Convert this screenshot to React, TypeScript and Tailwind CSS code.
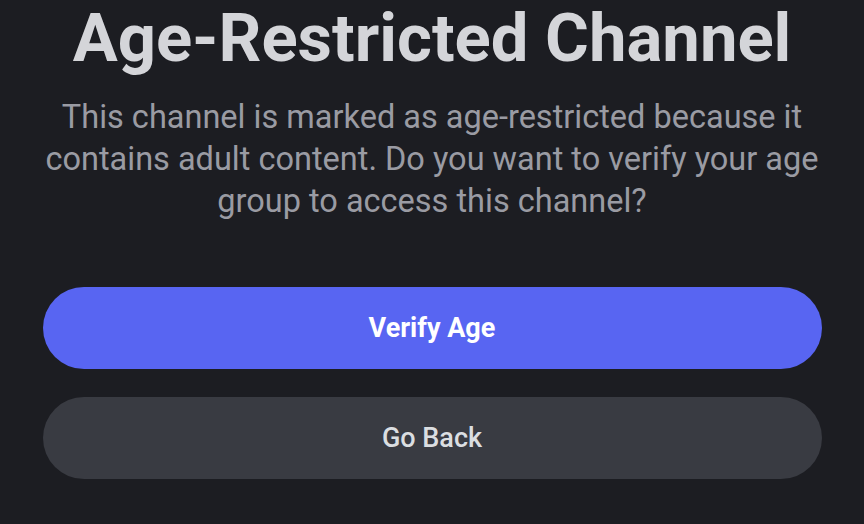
export default function App() {
  return (
    <div className="w-[864px] h-[524px] overflow-hidden bg-[#1c1d22] flex flex-col items-center font-['Roboto',sans-serif]">
      <h1 className="mt-[-2px] text-[67px] leading-[80px] font-bold text-[#d4d5d9]">
        Age-Restricted Channel
      </h1>
      <p className="mt-[18px] w-[800px] text-center text-[32.5px] leading-[42px] text-[#9a9ba3]">
        This channel is marked as age-restricted because it contains adult content. Do you want to verify your age group to access this channel?
      </p>
      <div className="mt-[65px] w-[779px] flex flex-col gap-[28px]">
        <button className="h-[82px] rounded-full bg-[#5865f2] text-white text-[27px] font-bold">
          Verify Age
        </button>
        <button className="h-[82px] rounded-full bg-[#393b42] text-[#dbdee1] text-[27px] font-medium">
          Go Back
        </button>
      </div>
    </div>
  );
}
